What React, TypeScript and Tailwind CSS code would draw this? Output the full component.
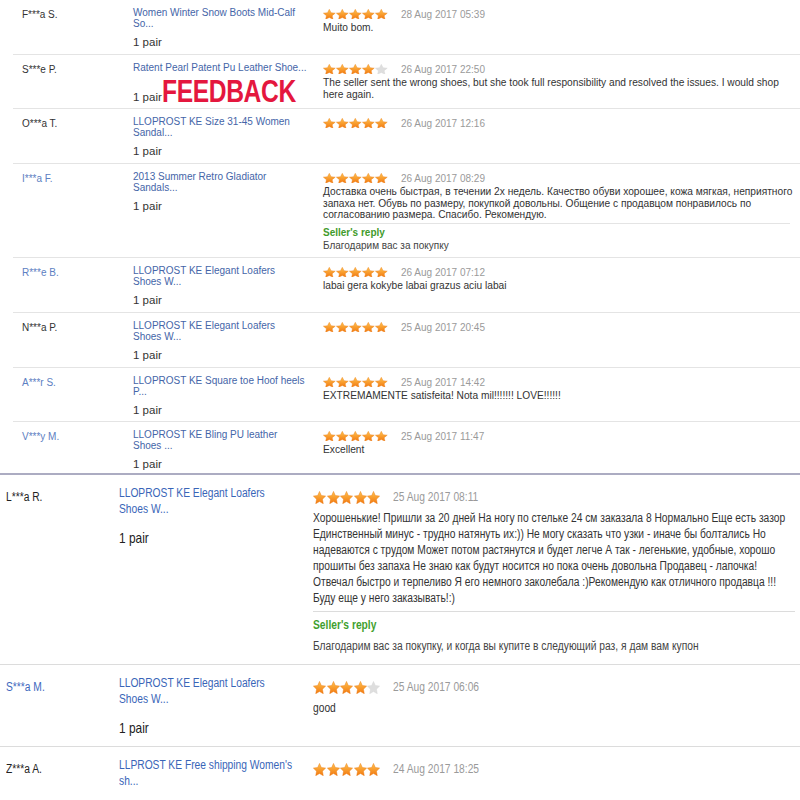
import React from 'react';

interface IReview {
  name: string;
  blue?: boolean;
  product: string[];
  stars: number;
  date: string;
  text: string[];
  reply?: string;
}

const topReviews: IReview[] = [
  { name: 'F***a S.', product: ['Women Winter Snow Boots Mid-Calf', 'So...'], stars: 5, date: '28 Aug 2017 05:39', text: ['Muito bom.'] },
  { name: 'S***e P.', product: ['Ratent Pearl Patent Pu Leather Shoe...'], stars: 4, date: '26 Aug 2017 22:50', text: ['The seller sent the wrong shoes, but she took full responsibility and resolved the issues. I would shop', 'here again.'] },
  { name: 'O***a T.', product: ['LLOPROST KE Size 31-45 Women', 'Sandal...'], stars: 5, date: '26 Aug 2017 12:16', text: [] },
  {
    name: 'I***a F.', blue: true, product: ['2013 Summer Retro Gladiator', 'Sandals...'], stars: 5, date: '26 Aug 2017 08:29',
    text: [
      'Доставка очень быстрая, в течении 2х недель. Качество обуви хорошее, кожа мягкая, неприятного',
      'запаха нет. Обувь по размеру, покупкой довольны. Общение с продавцом понравилось по',
      'согласованию размера. Спасибо. Рекомендую.',
    ],
    reply: 'Благодарим вас за покупку',
  },
  { name: 'R***e B.', blue: true, product: ['LLOPROST KE Elegant Loafers', 'Shoes W...'], stars: 5, date: '26 Aug 2017 07:12', text: ['labai gera kokybe labai grazus aciu labai'] },
  { name: 'N***a P.', product: ['LLOPROST KE Elegant Loafers', 'Shoes W...'], stars: 5, date: '25 Aug 2017 20:45', text: [] },
  { name: 'A***r S.', blue: true, product: ['LLOPROST KE Square toe Hoof heels', 'P...'], stars: 5, date: '25 Aug 2017 14:42', text: ['EXTREMAMENTE satisfeita! Nota mil!!!!!!! LOVE!!!!!!'] },
  { name: 'V***y M.', blue: true, product: ['LLOPROST KE Bling PU leather', 'Shoes ...'], stars: 5, date: '25 Aug 2017 11:47', text: ['Excellent'] },
];

const topHeights = ['h-[54px]', 'h-[54px]', 'h-[55px]', 'h-[94px]', 'h-[55px]', 'h-[55px]', 'h-[54px]', 'h-[52px]'];

const bottomReviews: IReview[] = [
  {
    name: 'L***a R.', product: ['LLOPROST KE Elegant Loafers', 'Shoes W...'], stars: 5, date: '25 Aug 2017 08:11',
    text: [
      'Хорошенькие! Пришли за 20 дней На ногу по стельке 24 см заказала 8 Нормально Еще есть зазор',
      'Единственный минус - трудно натянуть их:)) Не могу сказать что узки - иначе бы болтались Но',
      'надеваются с трудом Может потом растянутся и будет легче А так - легенькие, удобные, хорошо',
      'прошиты без запаха Не знаю как будут носится но пока очень довольна Продавец - лапочка!',
      'Отвечал быстро и терпеливо Я его немного заколебала :)Рекомендую как отличного продавца !!!',
      'Буду еще у него заказывать!:)',
    ],
    reply: 'Благодарим вас за покупку, и когда вы купите в следующий раз, я дам вам купон',
  },
  { name: 'S***a M.', blue: true, product: ['LLOPROST KE Elegant Loafers', 'Shoes W...'], stars: 4, date: '25 Aug 2017 06:06', text: ['good'] },
  { name: 'Z***a A.', product: ["LLPROST KE Free shipping Women's", 'sh...'], stars: 5, date: '24 Aug 2017 18:25', text: [] },
];

const bottomHeights = ['h-[190px]', 'h-[82px]', 'h-[60px]'];

// the lower screenshot is squeezed sideways, so its text is narrowed the same way
const narrow = 'origin-left scale-x-[0.82] whitespace-nowrap';

const Star = ({ on, w, h }: { on: boolean; w: number; h: number }) => (
  <svg width={w} height={h} viewBox="1.2 1 21.6 20.6" preserveAspectRatio="none">
    <path
      d="M12 1.6l3.05 6.55 7.15.95-5.25 4.95 1.35 7.1L12 17.7l-6.3 3.45 1.35-7.1L1.8 9.1l7.15-.95z"
      fill={on ? 'url(#starFill)' : '#dedede'}
      stroke={on ? '#e97a12' : '#d4d4d4'}
      strokeWidth="0.7"
      strokeLinejoin="round"
    />
  </svg>
);

const Stars = ({ n, w, h }: { n: number; w: number; h: number }) => (
  <div className="flex gap-[0.5px]">
    {[0, 1, 2, 3, 4].map(i => <Star key={i} on={i < n} w={w} h={h} />)}
  </div>
);

export default function App() {
  return (
    <div className="relative w-[800px] h-[800px] overflow-hidden bg-white font-['Liberation_Sans',Arial,sans-serif]">
      <svg width="0" height="0" className="absolute">
        <defs>
          <linearGradient id="starFill" x1="0" y1="0" x2="0" y2="1">
            <stop offset="0" stopColor="#ffc24e" />
            <stop offset="1" stopColor="#f2780f" />
          </linearGradient>
        </defs>
      </svg>

      {/* small, older part of the page */}
      <div className="pl-[13px]">
        {topReviews.map((r, i) => (
          <div key={r.name} className={`flex pt-[8px] ${i > 0 ? 'border-t border-[#e4e4e4]' : ''} ${topHeights[i]}`}>
            <div className={`w-[120px] pl-[9px] pt-[1px] text-[10px] leading-[12px] ${r.blue ? 'text-[#5d80c2]' : 'text-[#333]'}`}>{r.name}</div>
            <div className="w-[190px]">
              <div className="h-[22px] -mt-[1px] text-[10px] leading-[11px] text-[#4565a8]">
                {r.product.map(l => <div key={l} className="whitespace-nowrap">{l}</div>)}
              </div>
              <div className="mt-[7px] text-[11.5px] leading-[13px] text-[#333]">1 pair</div>
            </div>
            <div className="flex-1 min-w-0 pr-[10px]">
              <div className="flex items-center h-[12px]">
                <Stars n={r.stars} w={12.6} h={10.5} />
                <span className="ml-[13px] text-[10px] text-[#9a9a9a]">{r.date}</span>
              </div>
              <div className="mt-[2px] text-[10.2px] leading-[11.5px] text-[#333]">
                {r.text.map(l => <div key={l} className="whitespace-nowrap">{l}</div>)}
              </div>
              {r.reply && (
                <div className="mt-[2.5px] border-t border-[#e4e4e4]">
                  <div className="mt-[3px] text-[10px] leading-[12px] font-bold text-[#3f9b2c]">Seller's reply</div>
                  <div className="mt-[1px] text-[10px] leading-[12px] text-[#444]">{r.reply}</div>
                </div>
              )}
            </div>
          </div>
        ))}
      </div>
      <div className="h-[2px] bg-[#acacc2]" />

      {/* larger part of the page */}
      <div>
        {bottomReviews.map((r, i) => (
          <div key={r.name} className={`flex pt-[10px] border-b border-[#dcdcdc] ${bottomHeights[i]}`}>
            <div className="w-[119px] pl-[6px] pt-[4px] text-[12.5px] leading-[16px]">
              <div className={`${narrow} ${r.blue ? 'text-[#3e68be]' : 'text-[#222]'}`}>{r.name}</div>
            </div>
            <div className="w-[194px]">
              <div className={`${narrow} text-[12.5px] leading-[16px] text-[#3965b8]`}>
                {r.product.map(l => <div key={l}>{l}</div>)}
              </div>
              <div className={`${narrow} mt-[12px] text-[14.5px] leading-[18px] text-[#222]`}>1 pair</div>
            </div>
            <div className="flex-1 min-w-0 pt-[5px] pr-[5px]">
              <div className="flex items-center h-[14px]">
                <Stars n={r.stars} w={13} h={13} />
                <span className={`${narrow} inline-block ml-[13px] text-[12.5px] text-[#9a9a9a]`}>{r.date}</span>
              </div>
              <div className={`${narrow} mt-[6px] text-[12.5px] leading-[16px] text-[#333]`}>
                {r.text.map(l => <div key={l}>{l}</div>)}
              </div>
              {r.reply && (
                <div className="mt-[5px] border-t border-[#dcdcdc]">
                  <div className={`${narrow} mt-[5px] text-[12.5px] leading-[16px] font-bold text-[#3f9f2f]`}>Seller's reply</div>
                  <div className={`${narrow} mt-[5px] text-[12.5px] leading-[16px] text-[#444]`}>{r.reply}</div>
                </div>
              )}
            </div>
          </div>
        ))}
      </div>

      {/* overlay label */}
      <div className="absolute left-[162px] top-[75px] origin-left scale-x-[0.77] text-[32px] leading-none font-bold tracking-[-0.5px] text-[#e4173e] whitespace-nowrap">
        FEEDBACK
      </div>
    </div>
  );
}
